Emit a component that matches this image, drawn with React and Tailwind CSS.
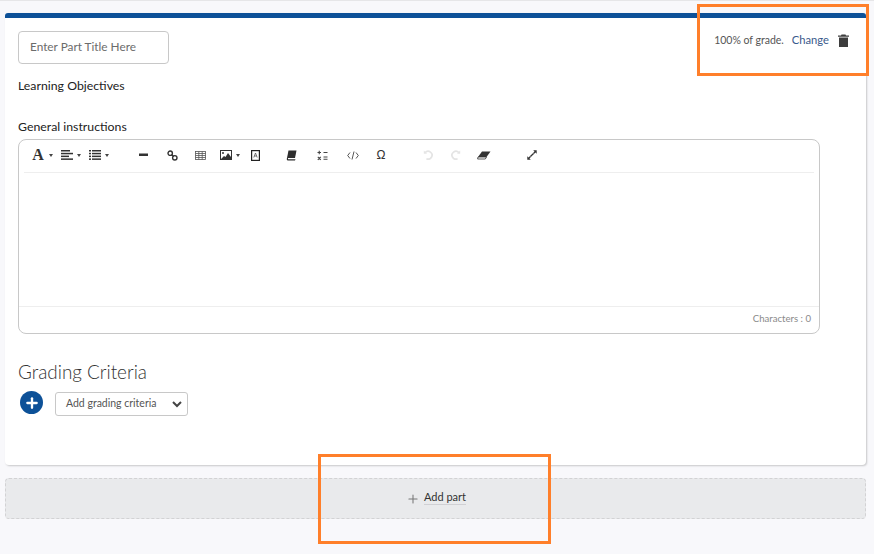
import { Plus } from 'lucide-react';

const Caret = () => <span className="ml-[3px] w-0 h-0 border-x-[2.5px] border-x-transparent border-t-[3px] border-t-[#444]" />;

const ToolBtn = ({ w = 28, className = '', children }) => (
  <div className={`flex items-center justify-center h-[20px] shrink-0 ${className}`} style={{ width: w }}>
    {children}
  </div>
);

const TextA = () => (
  <span className="text-[16px] leading-none text-[#333]" style={{ fontFamily: '"Liberation Serif", serif', fontWeight: 700 }}>A</span>
);

const AlignIcon = () => (
  <svg width="12" height="10" viewBox="0 0 12 10" fill="#333">
    <rect x="0" y="0" width="9" height="1.5" />
    <rect x="0" y="2.8" width="12" height="1.5" />
    <rect x="0" y="5.6" width="8" height="1.5" />
    <rect x="0" y="8.4" width="12" height="1.5" />
  </svg>
);

const ListIcon = () => (
  <svg width="12" height="10" viewBox="0 0 12 10" fill="#333">
    <rect x="0" y="0" width="2" height="1.5" /><rect x="3" y="0" width="9" height="1.5" />
    <rect x="0" y="2.8" width="2" height="1.5" /><rect x="3" y="2.8" width="9" height="1.5" />
    <rect x="0" y="5.6" width="2" height="1.5" /><rect x="3" y="5.6" width="9" height="1.5" />
    <rect x="0" y="8.4" width="2" height="1.5" /><rect x="3" y="8.4" width="9" height="1.5" />
  </svg>
);

const HrIcon = () => (
  <svg width="10" height="4" viewBox="0 0 10 4"><rect x="0" y="0.5" width="9" height="2.5" fill="#333" /></svg>
);

const LinkIcon = () => (
  <svg width="11" height="11" viewBox="0 0 11 11" fill="none" stroke="#333" strokeWidth="1.4">
    <circle cx="3.2" cy="3.2" r="2.2" />
    <circle cx="7.8" cy="7.8" r="2.2" />
    <path d="M4.6 4.6l2 2" />
  </svg>
);

const TableIcon = () => (
  <svg width="11" height="9" viewBox="0 0 11 9" fill="none" stroke="#555" strokeWidth="0.8">
    <rect x="0.5" y="0.5" width="10" height="8" />
    <path d="M0.5 2.500h10M0.5 4.500h10M0.5 6.500h10M3.800 0.500v8M7.200 0.500v8" />
  </svg>
);

const ImageIcon = () => (
  <svg width="12" height="10" viewBox="0 0 12 10">
    <rect x="0.5" y="0.5" width="11" height="9" fill="none" stroke="#333" />
    <circle cx="3" cy="3" r="1" fill="#333" />
    <path d="M1 9l3-3 1.5 1 2.5-4 3 4v2z" fill="#333" />
  </svg>
);

const BoxAIcon = () => (
  <svg width="9" height="11" viewBox="0 0 9 11">
    <rect x="0.6" y="0.6" width="7.8" height="9.8" fill="none" stroke="#222" strokeWidth="1.2" />
    <path d="M2.8 7.5l1.7-4.5 1.7 4.5M3.4 6h2.2" fill="none" stroke="#444" strokeWidth="0.7" />
  </svg>
);

const BookIcon = () => (
  <svg width="11" height="11" viewBox="0 0 11 11">
    <path d="M2.500 0.500h8l-1.500 7.500h-8z" fill="#2e2e2e" />
    <path d="M1 8c-.6 1.300 0 2.500.8 2.500h7.200l.5-1.200h-7c-.5 0-.7-.5-.4-1.300z" fill="#2e2e2e" />
  </svg>
);

const CalcIcon = () => (
  <svg width="11" height="11" viewBox="0 0 11 11" fill="none" stroke="#444" strokeWidth="1.1">
    <path d="M0.5 2.5h3.5M2.25 0.7v3.6M6.5 2.5h4M0.8 6.8l3 3M3.8 6.8l-3 3M6.5 7h4M6.5 9.2h4" />
  </svg>
);

const CodeIcon = () => (
  <svg width="12" height="9" viewBox="0 0 12 9" fill="none" stroke="#444" strokeWidth="0.9">
    <path d="M3 1.5L0.7 4.5 3 7.5M9 1.5l2.3 3L9 7.5M7 0.5L5 8.5" />
  </svg>
);

const UndoIcon = ({ flip }) => (
  <svg width="10" height="10" viewBox="0 0 10 10" fill="none" stroke="#e4e4e4" strokeWidth="1.7" style={flip ? { transform: 'scaleX(-1)' } : undefined}>
    <path d="M2.2 2.6A3.9 3.9 0 1 1 3.4 8.7" />
    <path d="M0.8 0.6v3.2h3.2z" fill="#e4e4e4" stroke="none" />
  </svg>
);

const EraserIcon = () => (
  <svg width="14" height="9" viewBox="0 0 14 9">
    <path d="M5 0.5h8.5l-4 5.5H1z" fill="#333" />
    <path d="M1 6h8.5L8.3 8H0.6z" fill="#fff" stroke="#333" strokeWidth="0.8" />
  </svg>
);

const ExpandIcon = () => (
  <svg width="10" height="10" viewBox="0 0 10 10" fill="#333">
    <path d="M6.200 0.300h3.500v3.500L8.400 2.500 7 3.900 6.100 3 7.500 1.600zM3.800 9.700H0.300V6.200L1.600 7.500 3 6.100l.9.9L2.500 8.400z" />
    <path d="M3 6.100L6.100 3l.9.9L3.900 7z" />
  </svg>
);

export default function App() {
  return (
    <div
      className="relative w-[874px] h-[554px] overflow-hidden bg-[#f8f8fb] text-[#333]"
      style={{ fontFamily: 'Lato, "Open Sans", sans-serif' }}
    >
      <div className="h-px bg-[#e6e6e8]" />
      <div className="pl-[5px] pr-[8px] pt-[12px]">
        {/* part card */}
        <div className="bg-white h-[452px] rounded-b-[4px] rounded-t-[3px] border-t-[5px] border-[#0d5198] shadow-[1px_1px_2px_rgba(0,0,0,0.2)] pl-[13px] pt-[13px]">
          <div className="flex justify-between items-start">
            <div className="w-[151px] h-[33px] rounded-[4px] border border-[#c8c8c8] flex items-center pl-[11px] pb-[2px] text-[11.8px] text-[#6b6b6b]">
              Enter Part Title Here
            </div>
            <div className="flex items-center pr-[17px] pt-[1px]">
              <span className="text-[10.5px] text-[#555]">100% of grade.</span>
              <span className="ml-[8px] text-[11.2px] text-[#3a5a8c]">Change</span>
              <svg className="ml-[9px]" width="11" height="13" viewBox="0 0 11 13" fill="#3d3d3d">
                <path d="M3.5 0.5h4l.5 1h3v1.3H0V1.500h3z" />
                <path d="M1 3.500h9V13H1z" />
              </svg>
            </div>
          </div>

          <div className="mt-[15px] text-[12.3px] leading-[14px] text-[#222]">Learning Objectives</div>
          <div className="mt-[27px] text-[12.3px] leading-[14px] text-[#222]">General instructions</div>

          {/* editor */}
          <div className="mt-[5px] w-[802px] h-[195px] rounded-[8px] border border-[#c8c8c8] flex flex-col">
            <div className="mx-[5px] h-[33px] border-b border-[#eeeeee] flex items-center pb-[2px]">
              <ToolBtn w={16} className="ml-[6px]"><TextA /></ToolBtn>
              <Caret />
              <ToolBtn w={14} className="ml-[7px]"><AlignIcon /></ToolBtn>
              <Caret />
              <ToolBtn w={14} className="ml-[7px]"><ListIcon /></ToolBtn>
              <Caret />
              <ToolBtn className="ml-[21px]"><HrIcon /></ToolBtn>
              <ToolBtn><LinkIcon /></ToolBtn>
              <ToolBtn><TableIcon /></ToolBtn>
              <ToolBtn w={14} className="ml-[5px]"><ImageIcon /></ToolBtn>
              <Caret />
              <ToolBtn w={14} className="ml-[8px]"><BoxAIcon /></ToolBtn>
              <ToolBtn className="ml-[15px]"><BookIcon /></ToolBtn>
              <ToolBtn className="ml-[3px]"><CalcIcon /></ToolBtn>
              <ToolBtn className="ml-[3px]"><CodeIcon /></ToolBtn>
              <ToolBtn><span className="text-[12px] text-[#333]" style={{ fontFamily: '"Liberation Sans", sans-serif' }}>Ω</span></ToolBtn>
              <ToolBtn className="ml-[19px]"><UndoIcon /></ToolBtn>
              <ToolBtn><UndoIcon flip /></ToolBtn>
              <ToolBtn><EraserIcon /></ToolBtn>
              <ToolBtn className="ml-[20px]"><ExpandIcon /></ToolBtn>
            </div>
            <div className="flex-1" />
            <div className="h-[27px] border-t border-[#eeeeee] flex items-center justify-end pr-[8px] pb-[2px] text-[9.6px] text-[#8a8a8a]">
              Characters : 0
            </div>
          </div>

          <div className="mt-[26px] text-[18.9px] leading-[24px] font-light text-[#333]">Grading Criteria</div>
          <div className="mt-[7px] flex items-start">
            <div className="ml-[2px] w-[23px] h-[23px] rounded-full bg-[#0d5198] flex items-center justify-center">
              <Plus className="w-[16px] h-[16px] text-white" strokeWidth={3.5} />
            </div>
            <div className="ml-[12px] mt-[1px] w-[133px] h-[24px] rounded-[3px] border border-[#c8c8c8] flex items-center justify-between pl-[10px] pr-[5px] text-[10.5px] text-[#555]">
              <span>Add grading criteria</span>
              <svg width="10" height="7" viewBox="0 0 10 7" fill="none" stroke="#444" strokeWidth="2"><path d="M1 1l4 4 4-4" /></svg>
            </div>
          </div>
        </div>

        {/* add part */}
        <div className="mt-[13px] h-[41px] rounded-[4px] border border-dashed border-[#d2d2d4] bg-[#e9eaec] flex items-center justify-center pb-[3px] pl-[1px] text-[11px] text-[#333]">
          <Plus className="w-[14px] h-[14px] text-[#777] mt-[3px]" strokeWidth={1.8} />
          <span className="ml-[4px] border-b border-[#d0d0d4] leading-[15px]">Add part</span>
        </div>
      </div>

      {/* annotation boxes */}
      <div className="absolute left-[697px] top-[4px] w-[172px] h-[72px] border-[3px] border-[#ff7f2a]" />
      <div className="absolute left-[318px] top-[454px] w-[233px] h-[90px] border-[3px] border-[#ff7f2a]" />
    </div>
  );
}
